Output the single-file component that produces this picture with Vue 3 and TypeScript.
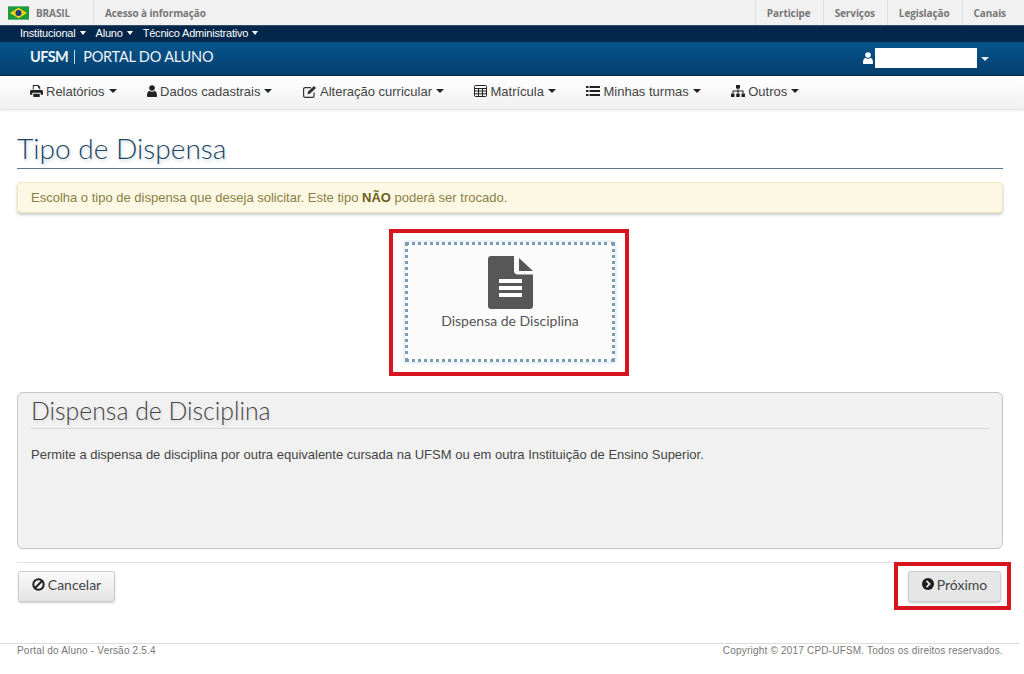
<script setup lang="ts">
const govLeft = 'Acesso à informação'
const govRight = ['Participe', 'Serviços', 'Legislação', 'Canais']
const systems = ['Institucional', 'Aluno', 'Técnico Administrativo']
const menu = [
  { label: 'Relatórios', icon: 'print' },
  { label: 'Dados cadastrais', icon: 'user' },
  { label: 'Alteração curricular', icon: 'edit' },
  { label: 'Matrícula', icon: 'table' },
  { label: 'Minhas turmas', icon: 'list' },
  { label: 'Outros', icon: 'sitemap' },
]
</script>

<template>
  <div class="page">
    <div class="gov">
      <div class="gov-brand">
        <svg class="flag" width="21" height="14" viewBox="0 0 22 14">
          <rect width="22" height="14" fill="#1f9a3c" />
          <path d="M11 1.500 20 7 11 12.500 2 7Z" fill="#f7d417" />
          <circle cx="11" cy="7" r="3.200" fill="#1d3f7c" />
        </svg>
        <span>BRASIL</span>
      </div>
      <a class="gov-item first">{{ govLeft }}</a>
      <div class="spacer"></div>
      <a v-for="g in govRight" :key="g" class="gov-item right">{{ g }}</a>
    </div>

    <div class="systems">
      <span v-for="s in systems" :key="s" class="sys">{{ s }}<i class="caret small"></i></span>
    </div>

    <div class="brandbar">
      <div class="brand"><b>UFSM</b><span class="sep"></span><span>PORTAL DO ALUNO</span></div>
      <div class="userbox">
        <svg width="10" height="12" viewBox="0 0 10 12"><circle cx="5" cy="3" r="2.800" fill="#fff" /><path d="M0 11c0-4 1.500-5 2.500-5 .7.500 1.500.8 2.500.8S6.800 6.500 7.500 6C8.500 6 10 7 10 11c0 .6-.4 1-1 1H1c-.6 0-1-.4-1-1Z" fill="#fff" /></svg>
        <span class="username"></span>
        <i class="caret white"></i>
      </div>
    </div>

    <nav class="menu">
      <span v-for="m in menu" :key="m.label" class="menu-item">
        <svg v-if="m.icon === 'print'" width="13" height="12" viewBox="0 0 14 13" fill="#222"><path d="M3 0h6l2 2v3H10V3H8.500V1.200H4V5H3ZM1.500 5.500h11c.8 0 1.500.7 1.500 1.500v3.500h-2.500V8.500h-9v2H0V7c0-.8.7-1.500 1.500-1.500ZM3.500 9.500h7V13h-7Z" /></svg>
        <svg v-else-if="m.icon === 'user'" width="10" height="12" viewBox="0 0 10 12" fill="#222"><circle cx="5" cy="3" r="2.800" /><path d="M0 11c0-4 1.500-5 2.500-5 .7.500 1.500.8 2.500.8S6.800 6.500 7.500 6C8.500 6 10 7 10 11c0 .6-.4 1-1 1H1c-.6 0-1-.4-1-1Z" /></svg>
        <svg v-else-if="m.icon === 'edit'" width="14" height="13" viewBox="0 0 14 13" fill="none" stroke="#333" stroke-width="1.200"><path d="M11 7.500V11c0 .8-.6 1.400-1.400 1.400H2C1.200 12.400.6 11.800.6 11V4C.6 3.200 1.200 2.600 2 2.600h6" /><path d="M5 6.500 11 .9l2 2-6 5.800-2.500.5Z" fill="#333" stroke="none" /></svg>
        <svg v-else-if="m.icon === 'table'" width="13" height="12" viewBox="0 0 13 12" fill="none" stroke="#222"><rect x=".5" y=".5" width="12" height="11" rx="1" /><path d="M.5 3.500h12M.5 6h12M.5 8.800h12M4.500 3.500v8M8.500 3.500v8" /></svg>
        <svg v-else-if="m.icon === 'list'" width="14" height="12" viewBox="0 0 14 12" fill="#222"><path d="M0 1h2.500v2H0ZM3.500 1H14v2H3.500ZM0 5h2.500v2H0ZM3.500 5H14v2H3.500ZM0 9h2.500v2H0ZM3.500 9H14v2H3.500Z" /></svg>
        <svg v-else width="14" height="12" viewBox="0 0 14 12" fill="#222"><path d="M5 0h4v3.500H7.500v2H12.500V8.500h-1V6.500h-4v2h-1v-2h-4v2h-1V5.500h5v-2H5Z" /><rect x="0" y="8.500" width="3.500" height="3.500" rx=".5" /><rect x="5.250" y="8.500" width="3.500" height="3.500" rx=".5" /><rect x="10.500" y="8.500" width="3.500" height="3.500" rx=".5" /></svg>
        <span class="menu-label">{{ m.label }}</span><i class="caret dark"></i>
      </span>
    </nav>

    <main class="content">
      <h1 class="title">Tipo de Dispensa</h1>
      <div class="alert">Escolha o tipo de dispensa que deseja solicitar. Este tipo <b>NÃO</b> poderá ser trocado.</div>

      <div class="choice-row">
        <div class="highlight card-highlight">
          <div class="card">
            <svg width="45" height="53" viewBox="0 0 45 53">
              <path d="M3 0h23v15c0 2 1.500 3.500 3.500 3.500H45V50c0 1.700-1.300 3-3 3H3c-1.700 0-3-1.300-3-3V3c0-1.700 1.300-3 3-3Z" fill="#575757" />
              <path d="M31 2 45 15H31Z" fill="#575757" />
              <path d="M11 23h23v4H11ZM11 30h23v4H11ZM11 37h23v4H11Z" fill="#fff" />
            </svg>
            <span>Dispensa de Disciplina</span>
          </div>
        </div>
      </div>

      <section class="panel">
        <h2>Dispensa de Disciplina</h2>
        <p>Permite a dispensa de disciplina por outra equivalente cursada na UFSM ou em outra Instituição de Ensino Superior.</p>
      </section>

      <div class="actions">
        <button class="btn cancel" type="button">
          <svg width="13" height="13" viewBox="0 0 13 13" fill="none" stroke="#222" stroke-width="2"><circle cx="6.500" cy="6.500" r="5.200" /><path d="M3 10 10 3" /></svg>
          Cancelar
        </button>
        <div class="highlight next-highlight">
          <button class="btn next" type="button">
            <svg width="12" height="12" viewBox="0 0 12 12"><circle cx="6" cy="6" r="6" fill="#1c1c1c" /><path d="M4.500 2.800 7.700 6 4.500 9.200" fill="none" stroke="#e6e6e6" stroke-width="1.800" /></svg>
            Próximo
          </button>
        </div>
      </div>
    </main>

    <footer class="footer">
      <span>Portal do Aluno - Versão 2.5.4</span>
      <span>Copyright © 2017 CPD-UFSM. Todos os direitos reservados.</span>
    </footer>
  </div>
</template>

<style>
html, body { margin: 0; background: #fff; }
</style>

<style scoped>
.page { width: 1024px; height: 674px; overflow: hidden; font-family: "Liberation Sans", Arial, sans-serif; color: #333; background: #fff; }
.gov { height: 25px; display: flex; align-items: stretch; padding-right: 6px; background: #f1f1f1; font-family: "Open Sans", sans-serif; font-size: 10px; font-weight: 700; color: #777; letter-spacing: -.1px; }
.gov-brand { width: 94px; box-sizing: border-box; padding-left: 8px; display: flex; align-items: center; gap: 7px; border-right: 1px solid #dfdfdf; }
.gov-item { display: flex; align-items: center; padding: 0 11px; }
.first { padding-left: 11px; }
.right { border-left: 1px solid #dfdfdf; padding: 0 12px 0 11px; }
.spacer { flex: 1; }
.systems { height: 17px; box-sizing: border-box; background: #03264a; border-top: 1px solid #33506a; padding-left: 20px; display: flex; align-items: center; gap: 10px; color: #fff; font-size: 11px; letter-spacing: -.2px; padding-bottom: 2px; }
.sys { white-space: nowrap; }
.caret { display: inline-block; width: 0; height: 0; border-left: 4px solid transparent; border-right: 4px solid transparent; border-top: 4px solid #fff; margin-left: 4px; vertical-align: 2px; }
.caret.small { border-left-width: 3.500px; border-right-width: 3.500px; }
.caret.dark { border-top-color: #222; border-left-width: 4.500px; border-right-width: 4.500px; border-top-width: 4.500px; margin-left: 4px; }
.brandbar { height: 34px; box-sizing: border-box; background: linear-gradient(#05558c, #063f6e); border-bottom: 1px solid #032a49; display: flex; align-items: center; justify-content: space-between; padding: 0 35px 4px 30px; color: #fff; }
.brand { display: flex; align-items: center; font-family: Lato, sans-serif; font-size: 14.500px; letter-spacing: -.2px; color: #eef3f7; }
.brand b { font-weight: 700; letter-spacing: -.6px; }
.sep { width: 1px; height: 14px; background: #c8d7e3; margin: 0 8px 0 6px; }
.userbox { display: flex; align-items: center; margin-top: 2px; }
.username { width: 102px; height: 20px; background: #fff; margin-left: 2px; }
.caret.white { margin: 3px 0 0 4px; border-left-width: 4.500px; border-right-width: 4.500px; border-top-width: 4.500px; border-top-color: #e8eef3; }
.menu { height: 34px; box-sizing: border-box; display: flex; align-items: center; padding: 0 0 3px 30px; background: linear-gradient(#fff, #f0f0f0); border-bottom: 1px solid #e4e4e4; box-shadow: 0 1px 2px rgba(0,0,0,.08); font-size: 13px; color: #444; }
.menu-item { display: flex; align-items: center; white-space: nowrap; margin-right: 30.500px; }
.menu-item svg { margin-right: 3px; }
.menu-item .caret { flex: none; }
.content { padding: 0 21px 0 17px; }
.title { margin: 0; height: 59px; box-sizing: border-box; padding-top: 20px; border-bottom: 1px solid #5d7486; font-family: Lato, sans-serif; font-weight: 300; font-size: 28.100px; line-height: 37px; color: #1f4560; text-shadow: 1px 2px 3px rgba(70,120,160,.3); }
.alert { margin-top: 13px; height: 31px; box-sizing: border-box; padding-left: 13px; background: #fcf8e3; border: 1px solid #f0e7c0; border-radius: 4px; box-shadow: 0 2px 3px rgba(0,0,0,.2); font-size: 13px; color: #8a7f45; display: block; line-height: 29px; }
.alert b { color: #6b6020; }
.choice-row { display: flex; justify-content: center; margin-top: 16px; padding-right: 2px; }
.highlight { border: 4px solid #d6151f; box-sizing: border-box; }
.card-highlight { width: 240px; height: 147px; padding: 9px 10px 10px 12px; }
.card { height: 120px; box-sizing: border-box; border: 3px dotted #7a9db5; background: #fbfbfb; box-shadow: 0 0 4px rgba(100,140,170,.4); display: flex; flex-direction: column; align-items: center; padding-top: 11px; font-family: Lato, sans-serif; font-size: 14px; color: #555; }
.card span { margin-top: 3px; }
.panel { margin-top: 16px; height: 157px; box-sizing: border-box; padding: 5px 13px; background: #f1f1f1; border: 1px solid #c6c6c6; border-radius: 6px; }
.panel h2 { margin: 0; height: 30px; font-family: Lato, sans-serif; font-weight: 300; font-size: 24.800px; line-height: 25px; color: #444; border-bottom: 1px solid #d5d5d5; text-shadow: 1px 2px 3px rgba(0,0,0,.12); }
.panel p { margin: 18px 0 0; font-size: 13px; line-height: 16px; color: #444; }
.actions { margin-top: 13px; border-top: 1px solid #e2e2e2; display: flex; justify-content: space-between; align-items: flex-start; padding-left: 1px; height: 80px; }
.btn { display: inline-flex; align-items: center; justify-content: center; gap: 3px; height: 31px; box-sizing: border-box; border: 1px solid #ccc; border-radius: 3px; background: linear-gradient(#fafafa, #e3e3e3); box-shadow: 0 1px 2px rgba(0,0,0,.2); font-family: Lato, sans-serif; font-size: 14px; color: #444; padding: 0 0 5px; }
.cancel { width: 97px; margin-top: 8px; }
.next { width: 93px; background: #e6e6e6; }
.next-highlight { width: 117px; height: 48px; padding: 5px 0 0 10px; margin: -1px -8px 0 0; }
.footer { border-top: 1px solid #ddd; height: 32px; box-sizing: border-box; padding: 0 16px 0 17px; margin-right: 5px; display: flex; justify-content: space-between; font-size: 10px; line-height: 14px; color: #777; letter-spacing: .2px; }
</style>
